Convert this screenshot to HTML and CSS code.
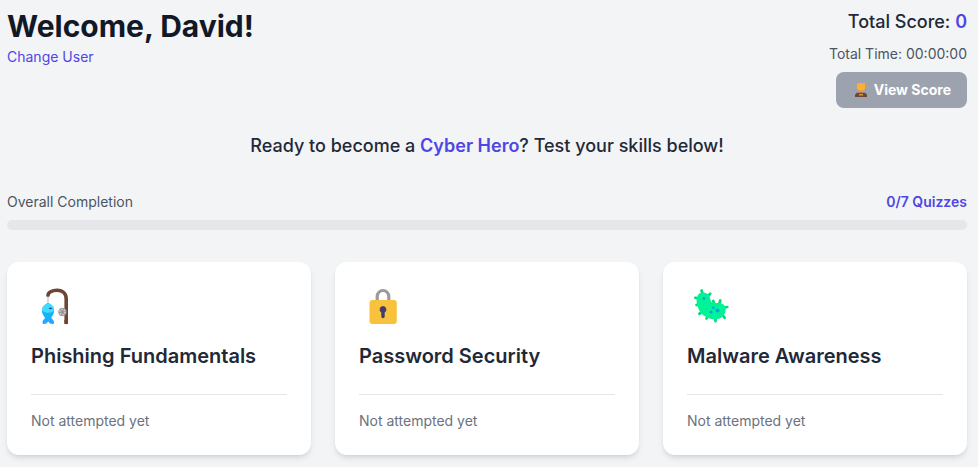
FILE: index.html
```html
<!DOCTYPE html>
<html lang="en">
<head>
<meta charset="utf-8">
<meta name="viewport" content="width=device-width, initial-scale=1">
<title>Cyber Hero</title>
<link rel="stylesheet" href="styles.css">
</head>
<body>
<header class="header">
  <div>
    <h1 class="welcome">Welcome, David!</h1>
    <a class="change-user" href="#">Change User</a>
  </div>
  <div class="stats">
    <p class="score">Total Score: <span class="accent">0</span></p>
    <p class="time">Total Time: 00:00:00</p>
    <button class="view-score" type="button" disabled>
      <svg class="trophy" viewBox="0 0 14 14" aria-hidden="true">
        <path d="M3.500 2H1.500V3.500Q1.500 5.500 4.200 5.600M10.500 2h2v1.500Q12.500 5.500 9.800 5.600" fill="none" stroke="#d99a4a" stroke-width=".8"/>
        <path d="M3 .3h8v3.900Q11 7 8.200 7.500V10H5.800V7.500Q3 7 3 4.200Z" fill="#fcb034"/>
        <path d="M6 7.500h2V10H6Z" fill="#e2922e"/>
        <path d="M2.500 9.700h9l.5 1.600h1V14H1v-2.700h1Z" fill="#6d4534"/>
        <path d="M5 11.200h4v1.200H5Z" fill="#f9a63a"/>
      </svg>
      <span>View Score</span>
    </button>
  </div>
</header>
<main>
  <p class="tagline">Ready to become a <strong>Cyber Hero</strong>? Test your skills below!</p>
  <section class="progress">
    <div class="progress-row">
      <span id="completion">Overall Completion</span>
      <span class="count">0/7 Quizzes</span>
    </div>
    <div class="track" role="progressbar" aria-labelledby="completion" aria-valuemin="0" aria-valuemax="7" aria-valuenow="0"></div>
  </section>
  <section class="cards">
    <article class="card">
      <svg class="icon" viewBox="1 0 50 50" aria-hidden="true">
        <path d="M18 15.500C18 12.500 22 10.300 27 10.300C33 10.300 36.200 14 36.200 19V42.500" fill="none" stroke="#6d4534" stroke-width="3.600" stroke-linecap="round"/>
        <path d="M34.400 40h3.600v4h-3.600Z" fill="#6d4534"/>
        <path d="M18 16v9" stroke="#b4b4b4" stroke-width="1"/>
        <path d="M18.200 34L23.500 40.500Q25 44 22.500 44Q19.500 44 18.200 41.500Q16.500 44 14 44Q11.500 44 13 40.500Z" fill="#26a9fc"/>
        <path d="M18 23C22.500 24.500 24.500 28 24 32Q23 37 18.200 40Q13 37 12 32C11.500 28 14 24.500 18 23Z" fill="#16b4f6"/>
        <path d="M18 23C22.500 24.500 24.200 27 24 31Q21 33.500 16 32.500Q13 32 12 30.500C12 27 14.500 24.500 18 23Z" fill="#3fdcff"/>
        <path d="M18.600 28.300Q20.500 26.800 22.300 28.300Q20.500 30 18.600 28.300Z" fill="#563c76"/>
        <circle cx="32.400" cy="32" r="4.200" fill="#9b9b9b"/>
        <circle cx="32.400" cy="32" r="2.600" fill="none" stroke="#d3d3d3" stroke-width="1.400" stroke-dasharray="1.500 1.200"/>
        <circle cx="32.400" cy="32" r=".8" fill="#8a8a94"/>
      </svg>
      <h2 class="title">Phishing Fundamentals</h2>
      <p class="status">Not attempted yet</p>
    </article>
    <article class="card">
      <svg class="icon" viewBox="1 0 50 50" aria-hidden="true">
        <path d="M19.200 22v-5.500a5.800 6 0 0 1 11.600 0V22" fill="none" stroke="#9b9b9b" stroke-width="3.200"/>
        <rect x="11.500" y="20" width="27.300" height="24" rx="3" fill="#f9c23c"/>
        <path d="M25 26a3.500 3.500 0 0 1 1.700 6.500V36.500a1.700 1.700 0 0 1-3.400 0V32.500A3.500 3.500 0 0 1 25 26Z" fill="#433b6b"/>
      </svg>
      <h2 class="title">Password Security</h2>
      <p class="status">Not attempted yet</p>
    </article>
    <article class="card">
      <svg class="icon" viewBox="1 0 50 50" aria-hidden="true">
        <path d="M15.500 10.500l1.700 5M24.200 13.700l-3 3M9.300 17.800l5 1M13.300 33.800l4-3M20.500 38.500l2-4M29.500 41.200v-5M38.600 37.800l-3-4M41.300 27l-5 1M34.300 20.500l-1.500 5M27.300 21l1 4M10.500 25l4-1" fill="none" stroke="#00dc76" stroke-width="2.700" stroke-linecap="round"/>
        <path d="M12 15C14.500 11.500 20.500 12 23 15.500C25 18.500 24 22 27 22.800C31.500 23.500 35 22 38.500 25.500C41 30 39 36 34.500 38C29 41 22 39 17 35C12 31 8.500 20.500 12 15Z" fill="#00f397"/>
        <g fill="#00a6ed"><circle cx="18" cy="18.500" r="1.400"/><circle cx="27.300" cy="27.700" r="1.300"/><circle cx="25" cy="32.200" r="1.400"/><circle cx="31.500" cy="30.500" r="2.100"/></g>
      </svg>
      <h2 class="title">Malware Awareness</h2>
      <p class="status">Not attempted yet</p>
    </article>
  </section>
</main>
</body>
</html>
```
FILE: styles.css
```css
* { box-sizing: border-box; margin: 0; }

body {
  padding: 8px 11px 12px 7px;
  background: #f3f4f6;
  color: #1f2937;
  font-family: Inter, "Liberation Sans", sans-serif;
  font-size: 14px;
  line-height: 20px;
}

.header { display: flex; justify-content: space-between; align-items: flex-start; }
.welcome { color: #111827; font-size: 30px; font-weight: 700; line-height: 36px; }
.change-user { display: block; margin-top: 3px; color: #4f46e5; text-decoration: none; }

.stats { display: flex; flex-direction: column; align-items: flex-end; }
.score { font-size: 18px; font-weight: 500; line-height: 28px; }
.accent { color: #4f46e5; font-weight: 600; }
.time { margin-top: 8px; color: #4b5563; }

.view-score {
  display: flex;
  align-items: center;
  gap: 6px;
  margin-top: 8px;
  padding: 8px 16px;
  border: 0;
  border-radius: 8px;
  background: #9ca3af;
  color: #fff;
  font: 700 14px/20px Inter, "Liberation Sans", sans-serif;
}
.trophy { width: 14px; height: 14px; margin-left: 2px; }

.tagline { margin-top: 24px; text-align: center; font-size: 18px; font-weight: 500; line-height: 28px; }
.tagline strong { color: #4f46e5; font-weight: 600; }

.progress { margin-top: 32px; }
.progress-row { display: flex; justify-content: space-between; color: #4b5563; }
.count { color: #4f46e5; font-weight: 600; }
.track { height: 10px; margin-top: 8px; border-radius: 5px; background: #e5e7eb; }

.cards { display: grid; grid-template-columns: repeat(3, 1fr); gap: 24px; margin-top: 32px; }
.card {
  padding: 18px 24px 24px;
  border-radius: 12px;
  background: #fff;
  box-shadow: 0 4px 6px -1px rgb(0 0 0 / 10%), 0 2px 4px -2px rgb(0 0 0 / 10%);
}
.icon { display: block; width: 50px; height: 50px; }
.title { margin-top: 12px; font-size: 20px; font-weight: 600; line-height: 28px; }
.status { margin-top: 24px; padding-top: 16px; border-top: 1px solid #e5e7eb; color: #6b7280; }
```
